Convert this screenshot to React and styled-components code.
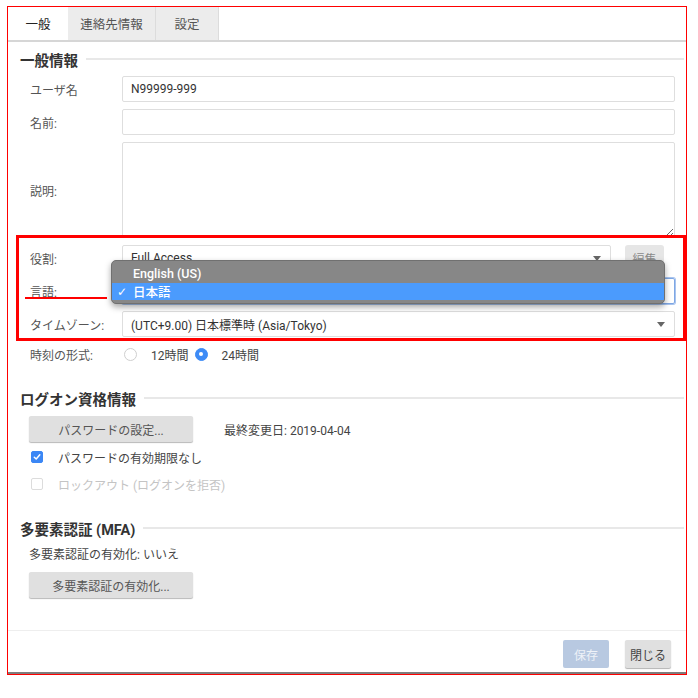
import React from "react";
import styled, { createGlobalStyle } from "styled-components";

const Global = createGlobalStyle`
  html, body { margin: 0; padding: 0; background: #fff; }
  body {
    font-family: "Roboto", "Noto Sans CJK JP", "Noto Sans", sans-serif;
    font-size: 12px;
    color: #444;
  }
  * { box-sizing: border-box; }
`;

const Page = styled.div`
  position: relative;
  width: 698px;
  height: 698px;
  padding: 6px 0 0 7px;
`;

const Dialog = styled.div`
  width: 680px;
  height: 669px;
  border: 1px solid #ff0000;
  display: flex;
  flex-direction: column;
  background: #fff;
`;

const TabBar = styled.div`
  display: flex;
  height: 35px;
  border-bottom: 2px solid #d6d6d6;
  flex-shrink: 0;
`;

const Tab = styled.div`
  width: ${(p) => p.$w}px;
  display: flex;
  align-items: center;
  justify-content: center;
  font-size: 12.5px;
  color: ${(p) => (p.$active ? "#222" : "#555")};
  background: ${(p) => (p.$active ? "#fff" : "#ececec")};
  border-right: ${(p) => (p.$active ? "none" : "1px solid #dcdcdc")};
`;

const Section = styled.section`
  display: flex;
  flex-direction: column;
  padding: 0 2px 0 12px;
  margin-top: ${(p) => p.$mt}px;
`;

const Heading = styled.h2`
  margin: 0;
  height: 20px;
  display: flex;
  align-items: center;
  gap: 8px;
  font-size: 14.5px;
  font-weight: 700;
  color: #333;
  &::after {
    content: "";
    flex: 1;
    height: 2px;
    background: #e8e8e8;
  }
`;

const FieldRow = styled.div`
  display: grid;
  grid-template-columns: 92px 1fr;
  align-items: center;
  padding: 0 9px 0 10px;
  margin-top: ${(p) => p.$mt ?? 7}px;
  min-height: ${(p) => p.$h ?? 26}px;
`;

const Label = styled.label`
  font-size: 12px;
  color: #555;
`;

const TextInput = styled.input`
  height: 26px;
  width: 100%;
  border: 1px solid #dedede;
  border-radius: 2px;
  padding: 0 8px;
  font: inherit;
  font-size: 12px;
  color: #333;
  outline: none;
`;

const TextArea = styled.textarea`
  height: 96px;
  width: 100%;
  border: 1px solid #dedede;
  border-radius: 2px;
  padding: 6px 8px;
  font: inherit;
  resize: vertical;
  outline: none;
  display: block;
`;

const ControlLine = styled.div`
  display: flex;
  align-items: center;
  gap: 14px;
  padding-right: 11px;
`;

const Select = styled.div`
  flex: 1;
  height: 26px;
  border: 1px solid ${(p) => (p.$focus ? "#7ea7e4" : "#dedede")};
  box-shadow: ${(p) => (p.$focus ? "0 0 0 1px #a9c4ee" : "none")};
  border-radius: 2px;
  display: flex;
  align-items: center;
  padding: 0 9px 0 8px;
  font-size: 12px;
  color: #333;
  & > span {
    flex: 1;
    white-space: nowrap;
    overflow: hidden;
  }
  &::after {
    content: "";
    width: 0;
    height: 0;
    border-left: 4.5px solid transparent;
    border-right: 4.5px solid transparent;
    border-top: 5px solid #666;
  }
`;

const SmallButton = styled.button`
  width: 39px;
  height: 26px;
  border: none;
  border-radius: 3px;
  background: #e6e6e6;
  color: #8a8a8a;
  font: inherit;
  font-size: 12px;
  padding: 0;
`;

const RadioGroup = styled.div`
  display: flex;
  align-items: center;
  padding-left: 2px;
`;

const Radio = styled.span`
  width: 13px;
  height: 13px;
  border-radius: 50%;
  border: 1px solid ${(p) => (p.$on ? "#3d8bf6" : "#cfcfcf")};
  background: ${(p) => (p.$on ? "#3d8bf6" : "#fff")};
  display: inline-flex;
  align-items: center;
  justify-content: center;
  margin-right: 14px;
  &::after {
    content: "";
    width: 4px;
    height: 4px;
    border-radius: 50%;
    background: ${(p) => (p.$on ? "#fff" : "transparent")};
  }
`;

const RadioText = styled.span`
  font-size: 12px;
  color: #444;
  margin-right: 6px;
`;

const ActionButton = styled.button`
  width: 164px;
  height: 26px;
  border: none;
  border-radius: 2px;
  background: #e0e0e0;
  box-shadow: 0 1px 1px rgba(0, 0, 0, 0.28);
  color: #555;
  font: inherit;
  font-size: 12px;
  padding: 0;
  margin: ${(p) => p.$mt}px 0 0 9px;
`;

const InfoLine = styled.div`
  display: flex;
  align-items: center;
  margin-top: ${(p) => p.$mt}px;
`;

const InfoText = styled.span`
  font-size: 12px;
  color: ${(p) => (p.$muted ? "#c4c4c4" : "#444")};
  margin-left: ${(p) => p.$ml ?? 0}px;
`;

const CheckRow = styled.div`
  display: flex;
  align-items: center;
  height: 20px;
  padding-left: 11px;
  margin-top: ${(p) => p.$mt}px;
`;

const CheckBox = styled.span`
  width: 12px;
  height: 12px;
  border-radius: 2px;
  border: 1px solid ${(p) => (p.$on ? "#3b87f5" : "#dcdcdc")};
  background: ${(p) => (p.$on ? "#3b87f5" : "#fff")};
  display: inline-flex;
  align-items: center;
  justify-content: center;
  margin-right: 15px;
`;

const TextLine = styled.div`
  height: 20px;
  display: flex;
  align-items: center;
  padding-left: 9px;
  margin-top: ${(p) => p.$mt}px;
  font-size: 12px;
  color: #444;
`;

const Footer = styled.div`
  margin-top: auto;
  border-top: 1px solid #eeeeee;
  border-bottom: 2px solid #7d7d7d;
  padding: 9px 15px 4px 0;
  display: flex;
  justify-content: flex-end;
  gap: 16px;
`;

const FooterButton = styled.button`
  height: 28px;
  min-width: 46px;
  padding: 0 5px;
  border: none;
  border-radius: 2px;
  font: inherit;
  font-size: 12px;
  background: ${(p) => (p.$primary ? "#b8c9e1" : "#e0e0e0")};
  color: ${(p) => (p.$primary ? "#eef2f8" : "#444")};
  box-shadow: ${(p) => (p.$primary ? "none" : "0 1px 1px rgba(0,0,0,0.3)")};
`;

/* annotation overlays */
const Highlight = styled.div`
  position: absolute;
  left: 16px;
  top: 235px;
  width: 670px;
  height: 106px;
  border: 3px solid #ff0000;
  pointer-events: none;
`;

const Underline = styled.div`
  position: absolute;
  left: 25px;
  top: 297px;
  width: 82px;
  height: 2px;
  background: #ff0000;
`;

const Popup = styled.div`
  position: absolute;
  left: 111px;
  top: 260px;
  width: 554px;
  height: 44px;
  background: #878787;
  border: 1px solid #707070;
  border-radius: 5px;
  box-shadow: 0 3px 6px rgba(0, 0, 0, 0.35);
  padding-top: 2px;
  overflow: hidden;
`;

const PopupItem = styled.div`
  position: relative;
  height: ${(p) => p.$h}px;
  display: flex;
  align-items: center;
  padding-left: 21px;
  font-size: 12.5px;
  font-weight: 500;
  color: #fff;
  background: ${(p) => (p.$selected ? "#4b9bfd" : "transparent")};
`;

const Check = styled.span`
  position: absolute;
  left: 5px;
  top: 50%;
  transform: translateY(-50%);
  font-size: 12px;
  font-family: "DejaVu Sans", sans-serif;
`;

const CheckMark = () => (
  <svg width="8" height="8" viewBox="0 0 8 8">
    <path d="M1.3 4.2 L3.2 6 L6.8 1.8" fill="none" stroke="#fff" strokeWidth="1.5" strokeLinecap="round" strokeLinejoin="round" />
  </svg>
);

export default function App() {
  return (
    <>
      <Global />
      <Page>
        <Dialog>
          <TabBar>
            <Tab $active $w={60}>一般</Tab>
            <Tab $w={88}>連絡先情報</Tab>
            <Tab $w={63}>設定</Tab>
          </TabBar>

          <Section $mt={7}>
            <Heading>一般情報</Heading>
            <FieldRow>
              <Label>ユーザ名</Label>
              <TextInput defaultValue="N99999-999" />
            </FieldRow>
            <FieldRow>
              <Label>名前:</Label>
              <TextInput defaultValue="" />
            </FieldRow>
            <FieldRow>
              <Label>説明:</Label>
              <TextArea defaultValue="" />
            </FieldRow>
            <FieldRow>
              <Label>役割:</Label>
              <ControlLine>
                <Select><span>Full Access</span></Select>
                <SmallButton>編集</SmallButton>
              </ControlLine>
            </FieldRow>
            <FieldRow>
              <Label>言語:</Label>
              <Select $focus><span /></Select>
            </FieldRow>
            <FieldRow>
              <Label>タイムゾーン:</Label>
              <Select><span>(UTC+9.00) 日本標準時 (Asia/Tokyo)</span></Select>
            </FieldRow>
            <FieldRow $h={20}>
              <Label>時刻の形式:</Label>
              <RadioGroup>
                <Radio />
                <RadioText>12時間</RadioText>
                <Radio $on />
                <RadioText>24時間</RadioText>
              </RadioGroup>
            </FieldRow>
          </Section>

          <Section $mt={24}>
            <Heading>ログオン資格情報</Heading>
            <InfoLine $mt={8}>
              <ActionButton $mt={0}>パスワードの設定...</ActionButton>
              <InfoText $ml={31}>最終変更日: 2019-04-04</InfoText>
            </InfoLine>
            <CheckRow $mt={5}>
              <CheckBox $on><CheckMark /></CheckBox>
              <InfoText>パスワードの有効期限なし</InfoText>
            </CheckRow>
            <CheckRow $mt={7}>
              <CheckBox />
              <InfoText $muted>ロックアウト (ログオンを拒否)</InfoText>
            </CheckRow>
          </Section>

          <Section $mt={24}>
            <Heading>多要素認証 (MFA)</Heading>
            <TextLine $mt={5}>多要素認証の有効化: いいえ</TextLine>
            <div>
              <ActionButton $mt={9}>多要素認証の有効化...</ActionButton>
            </div>
          </Section>

          <Footer>
            <FooterButton $primary>保存</FooterButton>
            <FooterButton>閉じる</FooterButton>
          </Footer>
        </Dialog>

        <Highlight />
        <Underline />
        <Popup>
          <PopupItem $h={20}>English (US)</PopupItem>
          <PopupItem $h={17} $selected>
            <Check>✓</Check>日本語
          </PopupItem>
        </Popup>
      </Page>
    </>
  );
}
